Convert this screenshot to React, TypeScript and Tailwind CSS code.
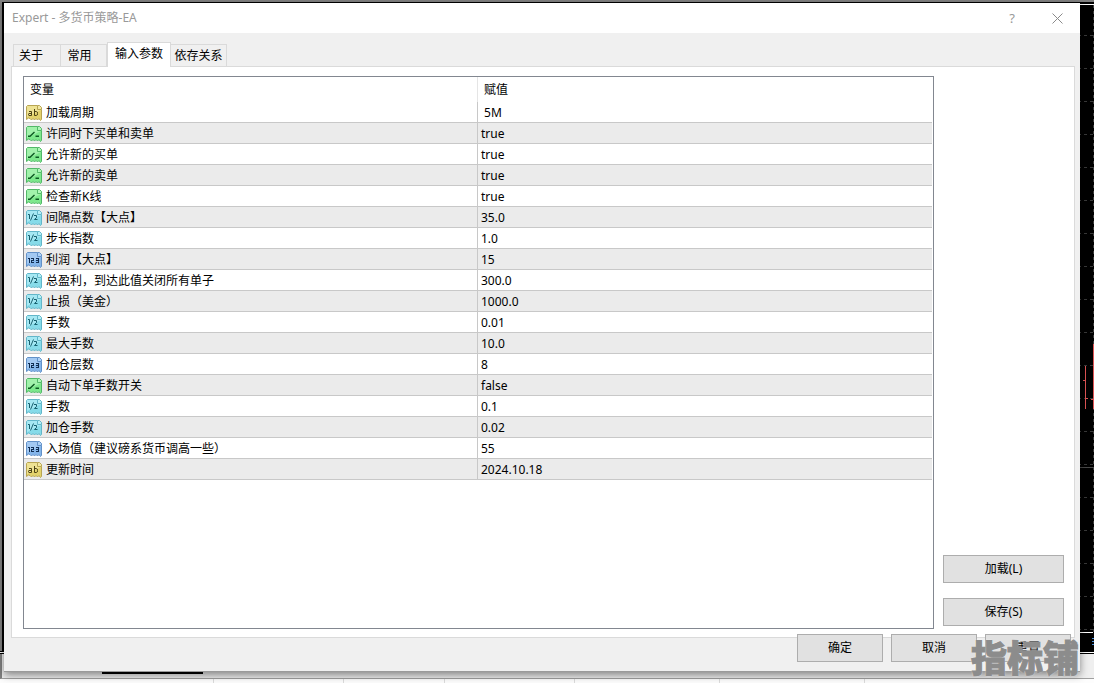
type IconKind = 'text' | 'bool' | 'double' | 'int';

interface Param {
  kind: IconKind;
  name: string;
  value: string;
}

const params: Param[] = [
  { kind: 'text', name: '加载周期', value: '\u00a05M' },
  { kind: 'bool', name: '许同时下买单和卖单', value: 'true' },
  { kind: 'bool', name: '允许新的买单', value: 'true' },
  { kind: 'bool', name: '允许新的卖单', value: 'true' },
  { kind: 'bool', name: '检查新K线', value: 'true' },
  { kind: 'double', name: '间隔点数【大点】', value: '35.0' },
  { kind: 'double', name: '步长指数', value: '1.0' },
  { kind: 'int', name: '利润【大点】', value: '15' },
  { kind: 'double', name: '总盈利，到达此值关闭所有单子', value: '300.0' },
  { kind: 'double', name: '止损（美金）', value: '1000.0' },
  { kind: 'double', name: '手数', value: '0.01' },
  { kind: 'double', name: '最大手数', value: '10.0' },
  { kind: 'int', name: '加仓层数', value: '8' },
  { kind: 'bool', name: '自动下单手数开关', value: 'false' },
  { kind: 'double', name: '手数', value: '0.1' },
  { kind: 'double', name: '加仓手数', value: '0.02' },
  { kind: 'int', name: '入场值（建议磅系货币调高一些）', value: '55' },
  { kind: 'text', name: '更新时间', value: '2024.10.18' },
];

const palette: Record<IconKind, { fill: string; light: string; edge: string; ink: string }> = {
  text: { fill: '#e3d26c', light: '#f2e8a4', edge: '#b8a552', ink: '#4d4314' },
  bool: { fill: '#7de88c', light: '#b0f7b8', edge: '#52b868', ink: '#0c5a22' },
  double: { fill: '#86dbe9', light: '#b4eef6', edge: '#62b6c9', ink: '#17606f' },
  int: { fill: '#84b5ea', light: '#b0d2f5', edge: '#6291c8', ink: '#102d52' },
};

function ParamIcon({ kind }: { kind: IconKind }) {
  const c = palette[kind];
  return (
    <svg className="block h-4 w-4 shrink-0" viewBox="0 0 16 16" fill="none" aria-hidden="true">
      {/* sheet with a torn lower edge */}
      <path
        d="M1.5.5H11.5V4.5H15.5V14.5L14.5 15.5 13 13.5 11.5 15 10 13.5 8.5 15 7 13.5 5.5 15 4 13.5 2.5 13 .5 14.5V1.5Z"
        fill={c.fill}
      />
      <path d="M1 1H11V5H15L1 12Z" fill={c.light} opacity="0.7" />
      <path
        d="M.5 14.5V1.5L1.5.5H11.5M15.5 4.5V14.5L14.5 15.5 13 13.5 11.5 15 10 13.5 8.5 15 7 13.5 5.5 15 4 13.5 2.5 13 .5 14.5"
        stroke={c.edge}
      />
      <path d="M11.5 4.5V.5H13.5L15.5 2.5V4.5Z" fill={c.light} stroke={c.edge} />
      {kind === 'text' && (
        <g stroke={c.ink}>
          <path d="M3 6.5H5.5V10.5H3Q2.5 10.5 2.5 9.5T3 8.5H5.5" />
          <path d="M8.5 4V10.5H10.5Q11.5 10.5 11.5 8.5T10.5 6.5H8.5" />
        </g>
      )}
      {kind === 'bool' && (
        <g stroke={c.ink} strokeWidth="1.4">
          <path d="M2 10.3H4L8.5 6M9.5 10.3H13" />
        </g>
      )}
      {kind === 'double' && (
        <g stroke={c.ink}>
          <path d="M2 4.5H3.5V9M7.5 3.5L4.5 10.5M8 5.5H10.5V7.5L8.5 9.5H11.5" />
        </g>
      )}
      {kind === 'int' && (
        <g stroke={c.ink} shapeRendering="crispEdges">
          <path d="M2 6.5H3.5V11M5 6.5H7.5V8.5H5.5V10.5H8M10 6.5H12.5V10.5H10M10 8.5H12.5" />
        </g>
      )}
    </svg>
  );
}

function Desktop() {
  return (
    <div className="absolute inset-0 flex flex-col bg-[#efefef]" aria-hidden="true">
      <div className="flex min-h-0 flex-1 flex-col border-t-2 border-[#808080]">
        <div className="flex min-h-0 flex-1 justify-end border-l-2 border-[#808080] bg-black">
          <svg className="h-full w-4 shrink-0" fill="none">
            <path d="M0 2.5H16" stroke="#fff" />
            <path
              d="M0 33.5H16M0 66.5H16M0 99.5H16M0 132.5H16M0 165.5H16M0 198.5H16M0 231.5H16M0 264.5H16M0 297.5H16M0 330.5H16M0 363.5H16M0 396.5H16M0 429.5H16M0 462.5H16M0 495.5H16M0 528.5H16M0 561.5H16M0 594.5H16M0 627.5H16"
              stroke="#3a3a3a"
              strokeDasharray="3 3"
            />
            <path d="M15.5 3V630" stroke="#3a3a3a" strokeDasharray="3 3" />
            <path d="M0 465.5H16" stroke="#4a4a4a" />
            <path d="M7.5 364V407M5 378.5H7M8 396.5H10M15.5 342V407M13 397.5H15" stroke="#e05555" />
            <path d="M0 630.5H15" stroke="#fff" />
            <path d="M14 636.5H16M14 639.5H16M14 642.5H16" stroke="#4a90d9" />
          </svg>
        </div>
        <div className="border-y border-black bg-white pt-px" />
      </div>
      <div className="flex h-[25px] border-b border-l-2 border-b-[#a0a0a0] border-l-[#808080] pl-[100px]">
        <div className="h-5 w-[101px] border-x border-b-2 border-black bg-[#d0d0d0]" />
      </div>
      <div className="flex h-1 bg-[#fdfdfd]">
        <div className="w-[214px] border-r border-[#dcdcdc]" />
        <div className="w-[130px] border-r border-[#dcdcdc]" />
        <div className="w-[101px] border-r border-[#dcdcdc]" />
        <div className="w-[130px] border-r border-[#dcdcdc]" />
        <div className="w-[145px] border-r border-[#dcdcdc]" />
        <div className="w-[145px] border-r border-[#dcdcdc]" />
      </div>
    </div>
  );
}

function TitleBar() {
  return (
    <header className="flex h-[30px] shrink-0 items-center bg-white pl-2 text-[#999999]">
      <h1 className="flex-1">Expert - 多货币策略-EA</h1>
      <button type="button" aria-label="帮助" className="flex h-full w-11 items-center justify-center text-[13px]">
        ?
      </button>
      <button type="button" aria-label="关闭" className="flex h-full w-[46px] items-center justify-center">
        <svg className="h-[11px] w-[11px]" viewBox="0 0 11 11" fill="none" stroke="#8a8a8a" aria-hidden="true">
          <path d="M.5.5L10.5 10.5M10.5.5L.5 10.5" />
        </svg>
      </button>
    </header>
  );
}

function Tabs() {
  const tab = 'h-[22px] border-t border-r border-[#dadada] text-center';
  return (
    <div role="tablist" className="flex items-end pl-0.5">
      <button type="button" role="tab" aria-selected="false" className={`${tab} w-12 border-l pr-3`}>
        关于
      </button>
      <button type="button" role="tab" aria-selected="false" className={`${tab} w-[46px] pr-2`}>
        常用
      </button>
      <button
        type="button"
        role="tab"
        aria-selected="true"
        className="relative -mb-px h-[25px] w-16 border border-b-0 border-[#dadada] bg-white pb-0.5 text-center"
      >
        输入参数
      </button>
      <button type="button" role="tab" aria-selected="false" className={`${tab} w-14`}>
        依存关系
      </button>
    </div>
  );
}

function ParamTable() {
  return (
    <div className="min-w-0 flex-1 border border-[#828790] bg-white pr-px">
      <table className="w-full table-fixed border-separate border-spacing-0">
        <thead>
          <tr className="h-[25px] text-left">
            <th scope="col" className="w-1/2 border-r border-[#e5e5e5] p-0 pl-1.5 font-normal">
              变量
            </th>
            <th scope="col" className="w-1/2 p-0 pl-1.5 font-normal">
              赋值
            </th>
          </tr>
        </thead>
        <tbody>
          {params.map((p, i) => (
            <tr key={i} className="h-[21px] even:bg-[#ebebeb]">
              <td className="border-r border-b border-[#c8c8c8] p-0 pt-0.5">
                <div className="flex items-center gap-1 pl-0.5">
                  <ParamIcon kind={p.kind} />
                  <span className="truncate">{p.name}</span>
                </div>
              </td>
              <td className="border-b border-[#c8c8c8] p-0 pt-0.5 pl-[3px]">{p.value}</td>
            </tr>
          ))}
        </tbody>
      </table>
    </div>
  );
}

const pushButton = 'h-7 border border-[#adadad] bg-[#e1e1e1] text-center';

export default function App() {
  return (
    <div className="relative h-screen overflow-hidden font-['Noto_Sans','Noto_Sans_CJK_SC',sans-serif] text-xs leading-4 text-black">
      <Desktop />
      <main className="absolute top-[3px] right-3.5 bottom-[11px] left-1 flex flex-col border-b border-[#9a9a9a] bg-[#f0f0f0] shadow-[0_3px_8px_rgba(0,0,0,0.45)]">
        <TitleBar />
        <div className="flex min-h-0 flex-1 flex-col pt-[9px] pr-[5px] pb-[9px] pl-[7px]">
          <Tabs />
          <section className="flex min-h-0 flex-1 gap-[9px] border border-[#dadada] bg-white pt-[9px] pr-2.5 pb-2 pl-[11px]">
            <ParamTable />
            <div className="flex w-[121px] shrink-0 flex-col justify-end gap-[15px] pb-[3px]">
              <button type="button" className={pushButton}>加载(L)</button>
              <button type="button" className={pushButton}>保存(S)</button>
            </div>
          </section>
          <div className="relative -mt-1 flex justify-end gap-2 pr-1">
            <button type="button" className={`${pushButton} w-[86px]`}>确定</button>
            <button type="button" className={`${pushButton} w-[86px]`}>取消</button>
            <button type="button" className={`${pushButton} w-[86px]`}>重置</button>
          </div>
        </div>
      </main>
      <div className="pointer-events-none absolute right-[15px] bottom-1.5 text-4xl leading-9 font-black text-[#8c8c8c] [-webkit-text-stroke:1px_#8c8c8c] [text-shadow:0_0_2px_#fff]">
        指标铺
      </div>
    </div>
  );
}
